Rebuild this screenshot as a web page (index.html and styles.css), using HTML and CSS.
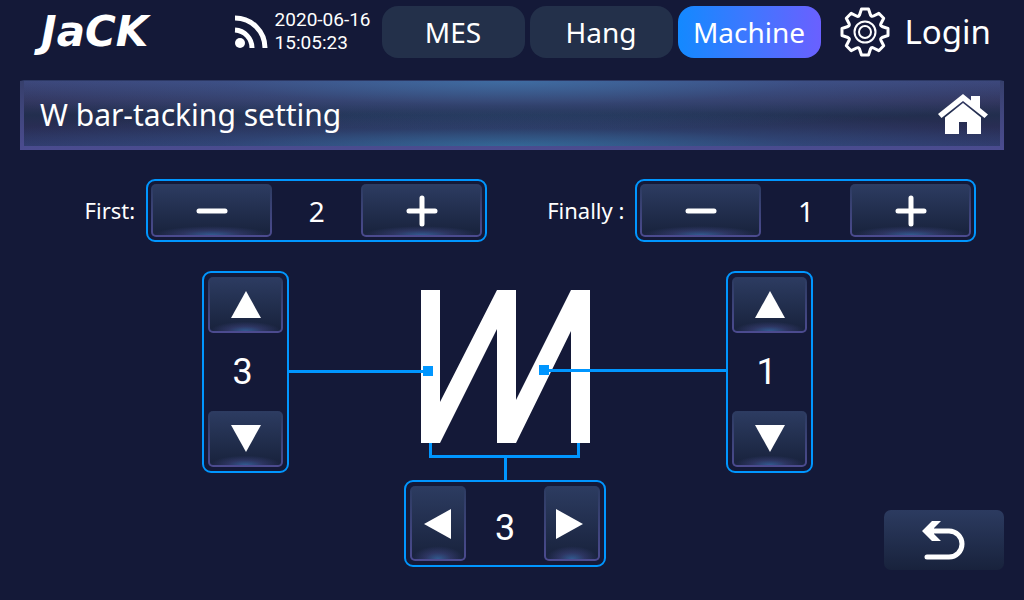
FILE: index.html
```html
<!DOCTYPE html>
<html lang="en">

<head>
    <meta charset="UTF-8">
    <meta name="viewport" content="width=device-width, initial-scale=1.0">
    <title>W bar-tacking setting</title>
    <link rel="stylesheet" href="styles.css">
</head>

<body>

    <header class="top-bar">
        <div class="logo">JaCK</div>
        <div class="status">
            <svg class="signal-icon" viewBox="0 0 36 34" aria-hidden="true">
                <circle cx="6" cy="28" r="5" />
                <path d="M1 15A18 18 0 0 1 18 33M1 3A30 30 0 0 1 31 33" />
            </svg>
            <time class="clock">2020-06-16<br>15:05:23</time>
        </div>
        <nav class="tabs">
            <button class="tab">MES</button>
            <button class="tab">Hang</button>
            <button class="tab selected">Machine</button>
        </nav>
        <button class="login-button">
            <svg class="gear-icon" viewBox="-25 -25 50 50" aria-hidden="true">
                <path d="M-3.5-23H3.5L5.5-17Q6.5-15 8.5-16L13.8-18.7L18.7-13.8L16-8.5Q15-6.5 17-5.5L23-3.5V3.5L17 5.5Q15 6.5 16 8.5L18.7 13.8L13.8 18.7L8.5 16Q6.5 15 5.5 17L3.5 23H-3.5L-5.5 17Q-6.5 15-8.5 16L-13.8 18.7L-18.7 13.8L-16 8.5Q-15 6.5-17 5.5L-23 3.5V-3.5L-17-5.5Q-15-6.5-16-8.5L-18.7-13.8L-13.8-18.7L-8.5-16Q-6.5-15-5.5-17Z" />
                <circle class="thin" r="10.5" />
                <circle class="thin" r="6" />
            </svg>
            <span>Login</span>
        </button>
    </header>

    <div class="title-bar">
        <h1>W bar-tacking setting</h1>
        <button class="home-button" aria-label="Home">
            <svg viewBox="0 0 50 42" aria-hidden="true">
                <path d="M0 20L25 0L33 6.500V2H42V14L50 20.500L46.500 24L25 7L3.500 24Z" />
                <path d="M25 9L43 23.500V40H29V28H21V40H7V23.500Z" />
            </svg>
        </button>
    </div>

    <main>
        <div class="fields">
            <div class="field">
                <label for="first">First:</label>
                <div class="stepper wide">
                    <button class="key" aria-label="Decrease first">
                        <svg viewBox="0 0 32 32"><path class="bar" d="M3 16H29" /></svg>
                    </button>
                    <output id="first">2</output>
                    <button class="key" aria-label="Increase first">
                        <svg viewBox="0 0 32 32"><path class="bar" d="M3 16H29M16 3V29" /></svg>
                    </button>
                </div>
            </div>
            <div class="field">
                <label for="finally">Finally :</label>
                <div class="stepper wide">
                    <button class="key" aria-label="Decrease finally">
                        <svg viewBox="0 0 32 32"><path class="bar" d="M3 16H29" /></svg>
                    </button>
                    <output id="finally">1</output>
                    <button class="key" aria-label="Increase finally">
                        <svg viewBox="0 0 32 32"><path class="bar" d="M3 16H29M16 3V29" /></svg>
                    </button>
                </div>
            </div>
        </div>

        <div class="workspace">
            <div class="diagram">
                <div class="stepper vertical">
                    <button class="key" aria-label="Increase left side">
                        <svg viewBox="0 0 32 32"><path d="M16 2L31 29H1Z" /></svg>
                    </button>
                    <output>3</output>
                    <button class="key" aria-label="Decrease left side">
                        <svg viewBox="0 0 32 32"><path d="M16 29L31 2H1Z" /></svg>
                    </button>
                </div>

                <div class="stitch">
                    <svg class="stitch-drawing" viewBox="0 0 437 209" aria-hidden="true">
                        <!-- W shaped stitch -->
                        <path class="thread" d="M132 19H151V131L208 19H227V129L282 19H301V172H282V60L227 172H208V58L151 172H132Z" />
                        <!-- lines to the steppers -->
                        <path class="lead" d="M0 100.500H136M258 99.500H437M141.500 172V185.500H289.500V172M216.500 185.500V209" />
                        <rect class="node" x="134" y="95" width="10" height="10" />
                        <rect class="node" x="250" y="94" width="10" height="10" />
                    </svg>
                    <div class="stepper horizontal">
                        <button class="key" aria-label="Decrease bottom">
                            <svg viewBox="0 0 32 32"><path d="M2 16L29 1V31Z" /></svg>
                        </button>
                        <output>3</output>
                        <button class="key" aria-label="Increase bottom">
                            <svg viewBox="0 0 32 32"><path d="M27 16L0 1V31Z" /></svg>
                        </button>
                    </div>
                </div>

                <div class="stepper vertical">
                    <button class="key" aria-label="Increase right side">
                        <svg viewBox="0 0 32 32"><path d="M16 2L31 29H1Z" /></svg>
                    </button>
                    <output>1</output>
                    <button class="key" aria-label="Decrease right side">
                        <svg viewBox="0 0 32 32"><path d="M16 29L31 2H1Z" /></svg>
                    </button>
                </div>
            </div>

            <button class="back-button" aria-label="Back">
                <svg viewBox="0 0 44 40" aria-hidden="true">
                    <path class="curve" d="M10 11H27A13 13 0 0 1 27 37H5" />
                    <path d="M0 11L10 1H19L12 8V14L19 21H10Z" />
                </svg>
            </button>
        </div>
    </main>

</body>

</html>
```
FILE: styles.css
```css
* {
    box-sizing: border-box;
}

body {
    margin: 0;
    min-height: 100vh;
    background-color: #141938;
    color: #fff;
    font-family: "Noto Sans", "Open Sans", sans-serif;
}

button {
    margin: 0;
    padding: 0;
    border: none;
    background: none;
    color: inherit;
    font: inherit;
    cursor: pointer;
}

svg {
    display: block;
    fill: #fff;
}

/* Top bar */
.top-bar {
    display: flex;
    align-items: center;
    height: 64px;
    padding: 0 33px 0 41px;
}

.logo {
    flex: 1;
    font: italic bold 42px/48px "DejaVu Sans", sans-serif;
}

.status {
    display: flex;
    align-items: center;
    gap: 5px;
    margin-right: 11px;
}

.signal-icon {
    width: 36px;
    height: 34px;
}

.signal-icon path {
    fill: none;
    stroke: #fff;
    stroke-width: 5;
}

.clock {
    padding-bottom: 2px;
    font: 19px/23px Roboto, sans-serif;
}

.tabs {
    display: flex;
    gap: 5px;
}

.tab {
    width: 143px;
    height: 52px;
    border-radius: 16px;
    background-color: #23304a;
    font-size: 28px;
    line-height: 52px;
}

.tab.selected {
    background: linear-gradient(to right, #1389ff, #3f77ff 50%, #6a60ff);
}

.login-button {
    display: flex;
    align-items: center;
    gap: 15px;
    margin-left: 19px;
    font-size: 33px;
    line-height: 52px;
}

.gear-icon {
    width: 50px;
    height: 50px;
    fill: none;
    stroke: #fff;
    stroke-width: 3;
    stroke-linejoin: round;
}

.gear-icon .thin {
    stroke-width: 2;
}

/* Title bar */
.title-bar {
    display: flex;
    align-items: center;
    justify-content: space-between;
    height: 70px;
    margin: 16px 20px 0;
    padding: 2px 12px 0 16px;
    border: 4px solid transparent;
    border-top: 1px solid #2d3965;
    background:
        radial-gradient(ellipse 60% 75% at 50% 0, rgba(65, 135, 190, 0.6), rgba(65, 125, 190, 0.2) 50%, transparent) padding-box,
        radial-gradient(ellipse 60% 55% at 50% 100%, rgba(55, 135, 180, 0.6), rgba(55, 125, 180, 0.2) 50%, transparent) padding-box,
        linear-gradient(#3c4477, #33365f 30%, #222e4e 52%, #292d54 72%, #30386a) padding-box,
        linear-gradient(#363f6b, #4b4c90) border-box;
}

.title-bar h1 {
    margin: 0;
    font-size: 30px;
    font-weight: normal;
    line-height: 40px;
}

.home-button svg {
    width: 50px;
    height: 42px;
}

/* First / Finally */
.fields {
    display: flex;
    justify-content: center;
    gap: 60px;
    padding: 29px 0 0 37px;
}

.field {
    display: flex;
    align-items: center;
    gap: 11px;
    font-size: 22px;
}

.field label {
    padding-bottom: 2px;
}

/* Steppers */
.stepper {
    display: flex;
    align-items: center;
    justify-content: space-between;
    border: 2px solid #0096ff;
    border-radius: 9px;
}

.stepper output {
    flex: 1;
    text-align: center;
    font: 36px/40px Roboto, sans-serif;
}

.wide {
    width: 341px;
    height: 63px;
    padding: 3px;
}

.wide output {
    font: 28px/40px "Noto Sans", sans-serif;
}

.vertical {
    flex-direction: column;
    width: 87px;
    height: 202px;
    padding: 4px;
}

.vertical output {
    flex: none;
    padding-right: 6px;
}

.horizontal {
    width: 202px;
    height: 87px;
    padding: 4px;
}

.horizontal output {
    padding-top: 8px;
}

.key {
    display: flex;
    align-items: center;
    justify-content: center;
    border: 2px solid transparent;
    border-radius: 5px;
    background:
        radial-gradient(ellipse 50% 18% at 50% 100%, rgba(60, 115, 180, 0.7), rgba(75, 80, 150, 0.4) 50%, transparent) padding-box,
        linear-gradient(#2c3b60, #18223c) padding-box,
        linear-gradient(#2c3b60, #4c4b90) border-box;
}

.key svg {
    width: 32px;
    height: 32px;
}

.key .bar {
    stroke: #fff;
    stroke-width: 5;
    stroke-linecap: round;
}

.wide .key {
    width: 121px;
    height: 53px;
}

.vertical .key {
    width: 75px;
    height: 56px;
}

.horizontal .key {
    width: 56px;
    height: 75px;
}

/* Stitch diagram */
.workspace {
    display: grid;
    grid-template-columns: 1fr auto 1fr;
    padding: 29px 20px;
}

.diagram {
    display: flex;
    grid-column: 2;
    align-items: flex-start;
    padding: 0 9px 3px 0;
}

.stitch {
    display: flex;
    flex-direction: column;
    align-items: center;
}

.stitch-drawing {
    width: 437px;
    height: 209px;
}

.stitch .stepper {
    margin-right: 5px;
}

.lead {
    fill: none;
    stroke: #0096ff;
    stroke-width: 3;
}

.node {
    fill: #0096ff;
}

.back-button {
    display: flex;
    grid-column: 3;
    align-items: center;
    justify-content: center;
    justify-self: end;
    align-self: end;
    width: 120px;
    height: 60px;
    border-radius: 7px;
    background: linear-gradient(#2c3b60, #18223c);
}

.back-button svg {
    width: 44px;
    height: 40px;
}

.back-button .curve {
    fill: none;
    stroke: #fff;
    stroke-width: 5;
    stroke-linecap: round;
}
```
